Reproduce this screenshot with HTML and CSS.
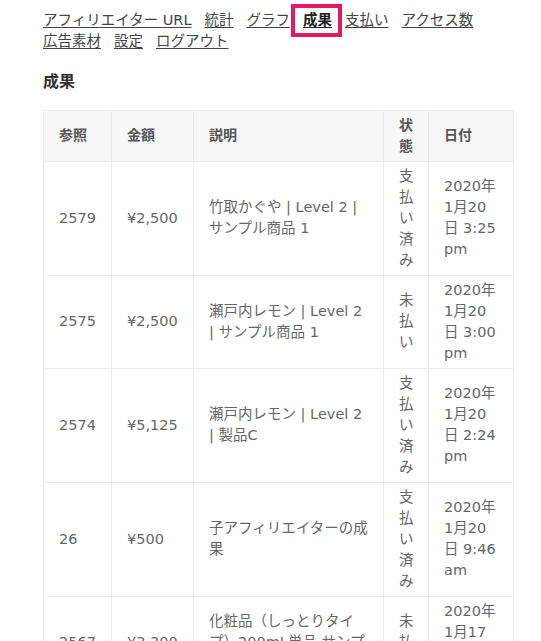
FILE: index.html
```html
<!DOCTYPE html>
<html lang="ja">
<head>
<meta charset="utf-8">
<title>成果</title>
<link rel="stylesheet" href="styles.css">
</head>
<body>
<div class="page">
  <nav class="nav">
    <a href="#" class="nav-link">アフィリエイター URL</a>
    <a href="#" class="nav-link">統計</a>
    <a href="#" class="nav-link">グラフ</a>
    <a href="#" class="nav-link is-active">成果</a>
    <a href="#" class="nav-link">支払い</a>
    <a href="#" class="nav-link">アクセス数</a>
    <a href="#" class="nav-link">広告素材</a>
    <a href="#" class="nav-link">設定</a>
    <a href="#" class="nav-link">ログアウト</a>
  </nav>

  <h2 class="title">成果</h2>

  <table class="referrals">
    <colgroup>
      <col class="col-ref">
      <col class="col-amount">
      <col class="col-desc">
      <col class="col-status">
      <col class="col-date">
    </colgroup>
    <thead>
      <tr>
        <th>参照</th>
        <th>金額</th>
        <th>説明</th>
        <th>状態</th>
        <th>日付</th>
      </tr>
    </thead>
    <tbody>
      <tr>
        <td>2579</td>
        <td>¥2,500</td>
        <td>竹取かぐや | Level 2 | サンプル商品 1</td>
        <td>支払い済み</td>
        <td>2020年1月20日 3:25 pm</td>
      </tr>
      <tr>
        <td>2575</td>
        <td>¥2,500</td>
        <td>瀬戸内レモン | Level 2 | サンプル商品 1</td>
        <td>未払い</td>
        <td>2020年1月20日 3:00 pm</td>
      </tr>
      <tr>
        <td>2574</td>
        <td>¥5,125</td>
        <td>瀬戸内レモン | Level 2 | 製品C</td>
        <td>支払い済み</td>
        <td>2020年1月20日 2:24 pm</td>
      </tr>
      <tr>
        <td>26</td>
        <td>¥500</td>
        <td>子アフィリエイターの成果</td>
        <td>支払い済み</td>
        <td>2020年1月20日 9:46 am</td>
      </tr>
      <tr>
        <td>2567</td>
        <td>¥3,300</td>
        <td>化粧品（しっとりタイプ）200mL単品 サンプル商品 1</td>
        <td>未払い</td>
        <td>2020年1月17日 4:12 pm</td>
      </tr>
    </tbody>
  </table>
</div>
</body>
</html>
```

FILE: styles.css
```css
html, body {
  margin: 0;
  padding: 0;
  background: #ffffff;
}

body {
  font-family: "DejaVu Sans", "Noto Sans CJK JP", sans-serif;
  font-size: 14.5px;
  color: #666666;
}

.page {
  padding: 10px 28px 0 43px;
}

.nav {
  display: flex;
  flex-wrap: wrap;
  column-gap: 13px;
  line-height: 21.3px;
}

.nav-link {
  color: #444444;
  text-decoration: underline;
  text-underline-offset: 2px;
  white-space: nowrap;
}

.nav-link.is-active {
  position: relative;
  color: #222222;
  font-weight: bold;
}

.nav-link.is-active::after {
  content: "";
  position: absolute;
  left: -12px;
  right: -10px;
  top: -6px;
  bottom: -6px;
  border: 4px solid #e5195e;
}

.title {
  margin: 17px 0 16px;
  font-size: 16px;
  line-height: 24px;
  font-weight: bold;
  color: #333333;
}

.referrals {
  width: 470px;
  table-layout: fixed;
  border-collapse: collapse;
  border: 1px solid #ececec;
}

.col-ref { width: 68px; }
.col-amount { width: 82px; }
.col-desc { width: 190px; }
.col-status { width: 45px; }
.col-date { width: 85px; }

.referrals th,
.referrals td {
  border: 1px solid #ececec;
  padding: 4px 15px;
  line-height: 21px;
  text-align: left;
  vertical-align: middle;
}

.referrals th {
  background: #f7f7f7;
  font-size: 14px;
  font-weight: bold;
  color: #555555;
}

.referrals td {
  color: #666666;
}
```
